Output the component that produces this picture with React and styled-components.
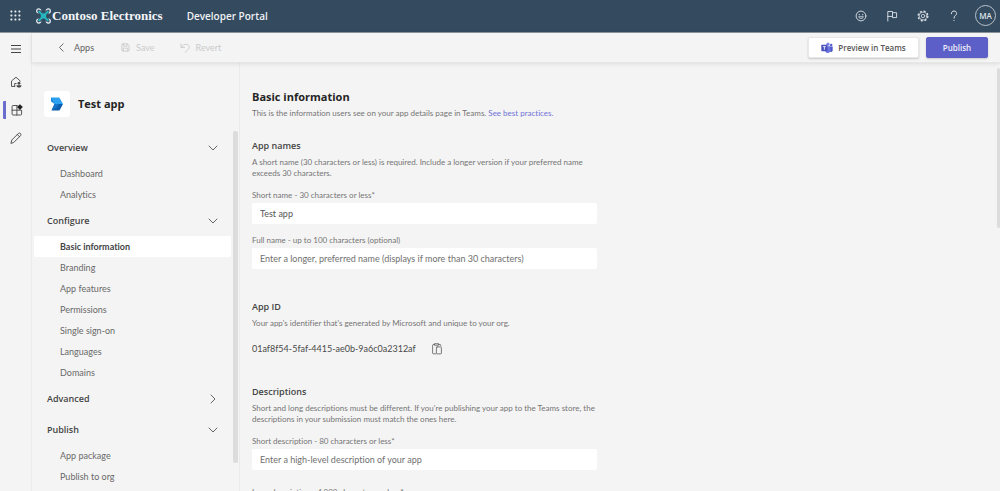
import React from 'react';
import styled, { createGlobalStyle, css } from 'styled-components';

const text = '"Lato", "Noto Sans", sans-serif';
const display = '"Open Sans", "Noto Sans", sans-serif';

const GlobalStyle = createGlobalStyle`
  *, *::before, *::after { box-sizing: border-box; }
  body {
    margin: 0;
    background: #f4f4f4;
    color: #4a4a4a;
    font-family: ${text};
    font-size: 9px;
    line-height: 14px;
    font-variant-ligatures: none;
  }
  button, input, textarea { font: inherit; color: inherit; font-variant-ligatures: none; }
  h1, h2, p { margin: 0; }
  svg { display: block; flex: none; }
`;

const Shell = styled.div`
  display: flex;
  flex-direction: column;
  height: 100vh;
  overflow: hidden;
`;

const TopBar = styled.header`
  display: flex;
  align-items: center;
  flex: none;
  height: 33px;
  padding: 0 4px 1px 10px;
  background: #344a5f;
  border-bottom: 1px solid #8e969d;
  color: #fff;
`;

const PlainButton = styled.button`
  display: flex;
  align-items: center;
  justify-content: center;
  padding: 0;
  border: 0;
  background: none;
  color: inherit;
  cursor: pointer;
`;

const Brand = styled.a`
  display: flex;
  align-items: center;
  gap: 1px;
  margin-left: 15px;
  color: #f4f6f8;
  font: 700 13px/18px "Liberation Serif", serif;
  text-decoration: none;
`;

const PortalName = styled.span`
  margin-left: 24px;
  color: #eef1f4;
  font: 600 10px/16px ${display};
`;

const TopActions = styled.div`
  display: flex;
  align-items: center;
  gap: 17px;
  margin-left: auto;
  color: #dfe5ea;
`;

const TopButton = styled(PlainButton)`
  width: 14px;
  height: 14px;
`;

const Avatar = styled(PlainButton)`
  width: 21px;
  height: 21px;
  margin-left: -3px;
  border: 1px solid #b9c3cc;
  border-radius: 50%;
  font: 600 8px/10px ${display};
`;

const Body = styled.div`
  display: flex;
  flex: 1;
  min-height: 0;
`;

const Rail = styled.nav`
  display: flex;
  flex-direction: column;
  flex: none;
  width: 32px;
  padding-top: 7px;
  border-right: 1px solid #ececec;
`;

const RailButton = styled(PlainButton)`
  height: 18px;
  margin-bottom: ${(p) => (p.$menu ? '15px' : '10px')};
  color: #444;
  ${(p) =>
    p.$active &&
    css`
      width: 28px;
      margin-left: 3px;
      padding-right: 4px;
      border-left: 3px solid #6a6dcd;
      border-radius: 1px;
    `}
`;

const Workspace = styled.div`
  display: flex;
  flex-direction: column;
  flex: 1;
  min-width: 0;
`;

const Toolbar = styled.div`
  display: flex;
  align-items: center;
  flex: none;
  z-index: 1;
  height: 30px;
  padding: 0 12px 0 24px;
  background: #f4f4f4;
  border-bottom: 1px solid #e6e6e6;
  box-shadow: 0 1px 4px rgba(0, 0, 0, 0.1);
`;

const ToolButton = styled(PlainButton)`
  gap: 7px;
  margin-right: 27px;
  color: #5f5f5f;
  &:disabled {
    gap: 6px;
    margin-right: 25px;
    color: #cbcbcb;
    cursor: default;
  }
`;

const ToolActions = styled.div`
  display: flex;
  gap: 7px;
  margin-left: auto;
`;

const ActionButton = styled.button`
  display: flex;
  align-items: center;
  justify-content: center;
  gap: 5px;
  height: 21px;
  padding: 0 12px;
  border: 1px solid ${(p) => (p.$primary ? '#5b5fc7' : '#e8e8e8')};
  border-radius: 2px;
  background: ${(p) => (p.$primary ? '#5b5fc7' : '#fff')};
  color: ${(p) => (p.$primary ? '#eeeefa' : '#555')};
  min-width: ${(p) => (p.$primary ? '62px' : '111px')};
  font: 600 8px/12px ${display};
  box-shadow: 0 1px 2px rgba(0, 0, 0, 0.18);
  cursor: pointer;
`;

const Columns = styled.div`
  display: flex;
  flex: 1;
  min-height: 0;
`;

const Sidebar = styled.aside`
  display: flex;
  flex-direction: column;
  flex: none;
  width: 208px;
  padding-top: 28px;
  border-right: 1px solid #eaeaea;
`;

const AppHeading = styled.div`
  display: flex;
  align-items: center;
  gap: 8px;
  margin: 0 0 14px 12px;
  color: #242424;
  font: 700 11px/16px ${display};
`;

const AppTile = styled.span`
  display: flex;
  align-items: center;
  justify-content: center;
  width: 26px;
  height: 26px;
  border-radius: 3px;
  background: #fff;
`;

const NavScroller = styled.div`
  display: flex;
  flex: 1;
  min-height: 0;
  padding-right: 1px;
`;

const NavList = styled.nav`
  flex: 1;
  padding: 1px 2px 0;
  overflow: hidden;
`;

const GroupButton = styled(PlainButton)`
  justify-content: space-between;
  width: 100%;
  height: 31px;
  padding: 0 13px;
  color: #444;
  font: 600 9px/14px ${display};
`;

const NavItem = styled.a`
  display: block;
  height: 21px;
  padding-left: 26px;
  border-radius: 2px;
  color: #696969;
  line-height: 21px;
  text-decoration: none;
  ${(p) =>
    p.$active &&
    css`
      background: #fff;
      color: #444;
      font-weight: 700;
    `}
`;

const Thumb = styled.div`
  flex: none;
  width: ${(p) => (p.$page ? '3px' : '5px')};
  height: ${(p) => (p.$page ? '160px' : '332px')};
  margin-top: ${(p) => (p.$page ? '5px' : '0')};
  border-radius: 2px;
  background: #dcdcdc;
`;

const Content = styled.main`
  flex: 1;
  min-width: 0;
  padding: 26px 12px 0;
  overflow: hidden;
`;

const Title = styled.h1`
  margin-bottom: 3px;
  color: #242424;
  font: 700 11px/16px ${display};
`;

const Section = styled.section`
  max-width: 345px;
  margin-top: ${(p) => (p.$first ? '20px' : '27px')};
  padding-bottom: ${(p) => (p.$fields ? '4px' : '0')};
`;

const SectionTitle = styled.h2`
  margin-bottom: 4px;
  color: #444;
  font: 600 9px/14px ${display};
`;

const Note = styled.p`
  color: #757575;
  font-size: 8px;
  line-height: 11px;
`;

const Link = styled.a`
  color: #6f72d6;
  text-decoration: none;
`;

const Field = styled.div`
  display: flex;
  flex-direction: column;
  gap: 2px;
  margin-top: ${(p) => (p.$spaced ? '17px' : '11px')};
`;

const Label = styled.label`
  color: #757575;
  font-size: 8px;
  line-height: 11px;
`;

const inputStyle = css`
  width: 100%;
  padding: 0 8px;
  border: 0;
  border-radius: 2px;
  background: #fff;
  color: #555;
  outline: none;
  &::placeholder { color: #707070; opacity: 1; }
`;

const Input = styled.input`
  ${inputStyle}
  height: 21px;
`;

const TextArea = styled.textarea`
  ${inputStyle}
  height: 63px;
  resize: none;
`;

const IdRow = styled.div`
  display: flex;
  align-items: center;
  gap: 15px;
  height: 18px;
  margin-top: 11px;
`;

function Icon({ size = 12, box = 12, children, ...rest }) {
  return (
    <svg width={size} height={size} viewBox={`0 0 ${box} ${box}`} fill="none" stroke="currentColor" strokeLinecap="round" strokeLinejoin="round" aria-hidden="true" {...rest}>
      {children}
    </svg>
  );
}

const Waffle = () => (
  <Icon size={11} box={11} stroke="none" fill="#e6ebef">
    {[0, 4, 8].map((y) => [0, 4, 8].map((x) => <rect key={`${x}-${y}`} x={x + 0.4} y={y + 0.4} width="2" height="2" rx="0.6" />))}
  </Icon>
);

const ringCentres = [[2.7, 2.9], [12.3, 2.9], [2.7, 13.1], [12.3, 13.1]];

const BrandMark = () => (
  <svg width="15" height="16" viewBox="0 0 15 16" fill="none" aria-hidden="true">
    {ringCentres.map(([x, y]) => <circle key={`${x}-${y}`} cx={x} cy={y} r="2" stroke="#eef2f5" strokeWidth="1.2" />)}
    <path d="M3 3.300 12 12.700M12 3.300 3 12.700" stroke="#344a5f" strokeWidth="3.400" />
    <path d="M3.200 3.600 11.800 12.400M11.800 3.600 3.200 12.400" stroke="#25b6bf" strokeWidth="2" strokeLinecap="round" />
    <rect x="4.900" y="5.400" width="5.200" height="5.200" rx="1.200" fill="#25b6bf" />
  </svg>
);

const Smile = () => (
  <Icon>
    <circle cx="6" cy="6" r="4.9" strokeWidth="0.9" />
    <path d="M3.7 7.1c.9 2 3.7 2 4.6 0z" strokeWidth="0.8" />
    <path d="M4.3 4.5v.2M7.7 4.5v.2" strokeWidth="1.2" />
  </Icon>
);

const Flag = () => (
  <Icon strokeWidth="0.9">
    <path d="M1.8 11V1.5h4.7v1.2h4.1v4.9H6.5V6.4H1.8M6.5 2.7v3.7" />
  </Icon>
);

const Gear = () => (
  <Icon strokeWidth="0.8">
    <circle cx="6" cy="6" r="4.9" strokeWidth="1.2" strokeDasharray="2.1 1.75" strokeLinecap="butt" />
    <circle cx="6" cy="6" r="3.9" />
    <circle cx="6" cy="6" r="1.7" />
  </Icon>
);

const Help = () => (
  <Icon strokeWidth="1">
    <path d="M3.4 3.7C3.4 2 4.5 1 6 1s2.6 1 2.6 2.5C8.6 5.3 6 5.6 6 8.1" />
    <circle cx="6" cy="10.5" r="0.6" fill="currentColor" stroke="none" />
  </Icon>
);

const Menu = () => (
  <Icon strokeWidth="1"><path d="M1 2.500h10M1 6h10M1 9.500h10" strokeLinecap="butt" /></Icon>
);

const Home = () => (
  <Icon strokeWidth="0.9">
    <path d="M4.700 10.400H1.500V5L6 1.200 10 4.800v.6M4.700 10.400V7.500h1.500" />
    <circle cx="9" cy="7.300" r="1.400" fill="currentColor" stroke="none" />
    <path d="M6.500 9.200h5c0 3.100-5 3.100-5 0z" fill="currentColor" stroke="none" />
  </Icon>
);

const AppsGrid = () => (
  <Icon strokeWidth="0.9">
    <path d="M6 1.5H2a.9.9 0 0 0-.9.9v7.700c0 .5.4.9.9.9h7.700c.5 0 .9-.4.9-.9V6.200H1.1M5.900 1.500V11" />
    <path d="M8.900.2l2.900 2.900L8.900 6 6 3.100z" fill="#222" stroke="none" />
  </Icon>
);

const Pencil = () => (
  <Icon strokeWidth="0.9">
    <path d="M1 11l.8-3L8.400 1.400c1.400-1.200 3.300.7 2.200 2.200L4 10.200zM7.300 2.500l2.200 2.200" />
  </Icon>
);

const BackArrow = () => (
  <Icon size={11} box={12} strokeWidth="1"><path d="M7.800 2 3.800 6l4 4" /></Icon>
);

const Save = () => (
  <Icon size={9} box={12} strokeWidth="1.2">
    <path d="M2.2 1.2h6.500l2.100 2.100v6.500c0 .6-.4 1-1 1H2.200c-.6 0-1-.4-1-1V2.200c0-.6.4-1 1-1zM3.600 1.200v3h4.600v-3M3 10.800V6.900h6v3.900" />
  </Icon>
);

const Revert = () => (
  <Icon size={10} box={12} strokeWidth="1.1">
    <path d="M1.200 1v4.300h4.300M1.500 5.100C3.400 2.700 5.200 1.500 7.400 1.500c3.600 0 4.700 3.600 2.800 5.700L6 11.400" />
  </Icon>
);

const TeamsMark = () => (
  <Icon size={12} box={12} stroke="none">
    <circle cx="10.2" cy="3" r="1.2" fill="#5059c9" />
    <circle cx="7" cy="2.2" r="1.6" fill="#7b83eb" />
    <path d="M8.5 4.600h3.200v3.600c0 1.300-1.200 2-2.400 1.700z" fill="#5059c9" />
    <path d="M4.200 4.300h5.200v4c0 3.700-5.200 3.700-5.200.3z" fill="#6d75e0" />
    <rect x="0.300" y="2.800" width="6.200" height="6.400" rx="0.600" fill="#4b53bc" />
    <path d="M2 4.600h2.800M3.400 4.600v3.200" stroke="#fff" strokeWidth="0.8" strokeLinecap="butt" />
  </Icon>
);

const AppLogo = () => (
  <Icon size={14} box={14} stroke="none">
    <path d="M1 .5h8.300L13 7H4.500L1 3.700z" fill="#2b9ff0" />
    <path d="M1 .5v3.800L4.500 7z" fill="#1684d8" />
    <path d="M4.500 7H13L9.500 13.500H1.500z" fill="#0b5cab" />
    <path d="M4.500 7h4.700l-2.400 3.600L1.500 13.500z" fill="#1374cc" />
  </Icon>
);

const Chevron = ({ open }) => (
  <Icon size={10} box={10} strokeWidth="0.9" stroke="#555">
    <path d={open ? 'M1 3l4 4 4-4' : 'M3 1l4 4-4 4'} />
  </Icon>
);

const Clipboard = () => (
  <Icon strokeWidth="0.8" stroke="#5a5a5a">
    <path d="M4.600 10.800H2.400a.8.8 0 0 1-.8-.8V2.300c0-.5.3-.8.8-.8h1.200M7.800 1.500H9c.5 0 .8.3.8.8v.5M3.700.7h4v1.500h-4z" />
    <rect x="5.400" y="3.900" width="5" height="7" rx="0.700" />
  </Icon>
);

const groups = [
  { name: 'Overview', open: true, items: ['Dashboard', 'Analytics'] },
  {
    name: 'Configure',
    open: true,
    items: ['Basic information', 'Branding', 'App features', 'Permissions', 'Single sign-on', 'Languages', 'Domains'],
  },
  { name: 'Advanced', open: false, items: [] },
  { name: 'Publish', open: true, items: ['App package', 'Publish to org'] },
];

export default function App() {
  return (
    <Shell>
      <GlobalStyle />
      <TopBar>
        <PlainButton aria-label="App launcher"><Waffle /></PlainButton>
        <Brand href="#"><BrandMark />Contoso Electronics</Brand>
        <PortalName>Developer Portal</PortalName>
        <TopActions>
          <TopButton aria-label="Feedback"><Smile /></TopButton>
          <TopButton aria-label="What's new"><Flag /></TopButton>
          <TopButton aria-label="Settings"><Gear /></TopButton>
          <TopButton aria-label="Help"><Help /></TopButton>
          <Avatar aria-label="Account">MA</Avatar>
        </TopActions>
      </TopBar>
      <Body>
        <Rail aria-label="Main">
          <RailButton $menu aria-label="Menu"><Menu /></RailButton>
          <RailButton aria-label="Home"><Home /></RailButton>
          <RailButton $active aria-label="Apps"><AppsGrid /></RailButton>
          <RailButton aria-label="Tools"><Pencil /></RailButton>
        </Rail>
        <Workspace>
          <Toolbar>
            <ToolButton><BackArrow />Apps</ToolButton>
            <ToolButton disabled><Save />Save</ToolButton>
            <ToolButton disabled><Revert />Revert</ToolButton>
            <ToolActions>
              <ActionButton><TeamsMark />Preview in Teams</ActionButton>
              <ActionButton $primary>Publish</ActionButton>
            </ToolActions>
          </Toolbar>
          <Columns>
            <Sidebar>
              <AppHeading><AppTile><AppLogo /></AppTile>Test app</AppHeading>
              <NavScroller>
                <NavList aria-label="App settings">
                  {groups.map((group) => (
                    <React.Fragment key={group.name}>
                      <GroupButton aria-expanded={group.open}>
                        {group.name}
                        <Chevron open={group.open} />
                      </GroupButton>
                      {group.items.map((item) => (
                        <NavItem key={item} href="#" $active={item === 'Basic information'}>{item}</NavItem>
                      ))}
                    </React.Fragment>
                  ))}
                </NavList>
                <Thumb />
              </NavScroller>
            </Sidebar>
            <Content>
              <Title>Basic information</Title>
              <Note>
                This is the information users see on your app details page in Teams. <Link href="#">See best practices.</Link>
              </Note>
              <Section $first $fields>
                <SectionTitle>App names</SectionTitle>
                <Note>A short name (30 characters or less) is required. Include a longer version if your preferred name exceeds 30 characters.</Note>
                <Field>
                  <Label htmlFor="short-name">Short name - 30 characters or less*</Label>
                  <Input id="short-name" defaultValue="Test app" />
                </Field>
                <Field>
                  <Label htmlFor="full-name">Full name - up to 100 characters (optional)</Label>
                  <Input id="full-name" placeholder="Enter a longer, preferred name (displays if more than 30 characters)" />
                </Field>
              </Section>
              <Section>
                <SectionTitle>App ID</SectionTitle>
                <Note>Your app's identifier that's generated by Microsoft and unique to your org.</Note>
                <IdRow>
                  01af8f54-5faf-4415-ae0b-9a6c0a2312af
                  <PlainButton aria-label="Copy app ID"><Clipboard /></PlainButton>
                </IdRow>
              </Section>
              <Section>
                <SectionTitle>Descriptions</SectionTitle>
                <Note>Short and long descriptions must be different. If you're publishing your app to the Teams store, the descriptions in your submission must match the ones here.</Note>
                <Field>
                  <Label htmlFor="short-description">Short description - 80 characters or less*</Label>
                  <Input id="short-description" placeholder="Enter a high-level description of your app" />
                </Field>
                <Field $spaced>
                  <Label htmlFor="long-description">Long description - 4,000 characters or less*</Label>
                  <TextArea id="long-description" />
                </Field>
              </Section>
            </Content>
            <Thumb $page />
          </Columns>
        </Workspace>
      </Body>
    </Shell>
  );
}
